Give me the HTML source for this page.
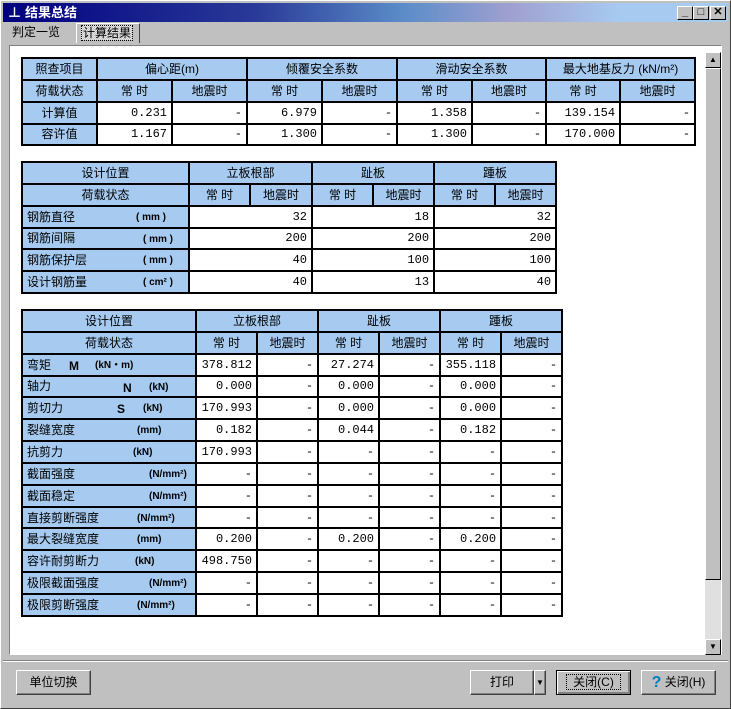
<!DOCTYPE html>
<html><head><meta charset="utf-8">
<style>
*{margin:0;padding:0;box-sizing:border-box}
body{width:731px;height:709px;background:#c0c0c0;font-family:"Liberation Sans","Noto Sans CJK SC","WenQuanYi Zen Hei",sans-serif;font-size:12px;position:relative;overflow:hidden;color:#000}
.win{position:absolute;left:0;top:0;width:731px;height:709px;border:1px solid #fff;border-right-color:#404040;border-bottom-color:#404040}
.title{position:absolute;left:3px;top:3px;width:725px;height:19px;background:linear-gradient(90deg,#000080 0%,#2a3a98 35%,#5a8cc8 55%,#a0a0d0 70%,#a6caf0 85%,#a6caf0 100%);color:#fff;font-weight:bold;font-size:13px;line-height:19px;padding-left:22px}
.tb{position:absolute;top:3px;width:16px;height:14px;background:#c0c0c0;border:1px solid #fff;border-right-color:#000;border-bottom-color:#000;color:#000;font-size:11px;line-height:11px;text-align:center;font-weight:bold}
.tab{position:absolute;top:23px;height:20px;line-height:18px;font-size:12px}
.panel{position:absolute;left:9px;top:45px;width:713px;height:610px;background:#fff;border:1px solid #808080;border-right-color:#fff;border-bottom-color:#fff}
table{position:absolute;border-collapse:collapse;table-layout:fixed}
td{border:2px solid #000;height:21.85px;line-height:18px;padding:0 4px;white-space:nowrap;overflow:hidden}
.h{background:#a6caf0;text-align:center}
.l{background:#a6caf0;text-align:left;position:relative}
.v{background:#fff;text-align:right;font-family:"Liberation Mono","Noto Sans CJK SC",monospace;font-size:12px}
.u{position:absolute;top:2px;font-size:10px;font-weight:bold}
.btn{position:absolute;height:25px;background:#c0c0c0;border:1px solid #fff;border-right-color:#404040;border-bottom-color:#404040;box-shadow:inset -1px -1px #808080;text-align:center;line-height:23px;font-size:12px}
.sb{position:absolute;left:705px;top:52px;width:16px;height:603px;background:#e0e0e0}
.sbb{position:absolute;left:0;width:16px;height:16px;background:#c0c0c0;border:1px solid #fff;border-right-color:#000;border-bottom-color:#000;font-size:8px;line-height:14px;text-align:center}
</style></head><body>
<div class="win"></div>
<div class="title"><span style="position:absolute;left:5px;top:0;font-size:13px">⊥</span>结果总结
<div class="tb" style="left:674px">_</div><div class="tb" style="left:690px">□</div><div class="tb" style="left:707px">✕</div></div>
<div class="tab" style="left:8px;width:62px;padding-left:4px">判定一览</div>
<div class="tab" style="left:76px;width:64px;border:1px solid #fff;border-right-color:#404040;border-bottom:none;padding-left:4px;background:#c0c0c0"><span style="border:1px dotted #000;padding:0 1px;background:repeating-conic-gradient(#c0c0c0 0 25%,#e8e8e8 0 50%) 0 0/2px 2px">计算结果</span></div>
<div class="panel"></div>

<table style="left:21px;top:57px;width:673px">
<colgroup><col style="width:75px"><col style="width:75px"><col style="width:75px"><col style="width:75px"><col style="width:75px"><col style="width:75px"><col style="width:74px"><col style="width:74px"><col style="width:75px"></colgroup>
<tr><td class="h">照查项目</td><td class="h" colspan="2">偏心距(m)</td><td class="h" colspan="2">倾覆安全系数</td><td class="h" colspan="2">滑动安全系数</td><td class="h" colspan="2">最大地基反力 (kN/m²)</td></tr>
<tr><td class="h">荷载状态</td><td class="h">常 时</td><td class="h">地震时</td><td class="h">常 时</td><td class="h">地震时</td><td class="h">常 时</td><td class="h">地震时</td><td class="h">常 时</td><td class="h">地震时</td></tr>
<tr><td class="h">计算值</td><td class="v">0.231</td><td class="v">-</td><td class="v">6.979</td><td class="v">-</td><td class="v">1.358</td><td class="v">-</td><td class="v">139.154</td><td class="v">-</td></tr>
<tr><td class="h">容许值</td><td class="v">1.167</td><td class="v">-</td><td class="v">1.300</td><td class="v">-</td><td class="v">1.300</td><td class="v">-</td><td class="v">170.000</td><td class="v">-</td></tr>
</table>

<table style="left:21px;top:161px;width:534px">
<colgroup><col style="width:167px"><col style="width:61px"><col style="width:62px"><col style="width:61px"><col style="width:61px"><col style="width:61px"><col style="width:61px"></colgroup>
<tr><td class="h">设计位置</td><td class="h" colspan="2">立板根部</td><td class="h" colspan="2">趾板</td><td class="h" colspan="2">踵板</td></tr>
<tr><td class="h">荷载状态</td><td class="h">常 时</td><td class="h">地震时</td><td class="h">常 时</td><td class="h">地震时</td><td class="h">常 时</td><td class="h">地震时</td></tr>
<tr><td class="l">钢筋直径<span class="u" style="left:113px">( mm )</span></td><td class="v" colspan="2">32</td><td class="v" colspan="2">18</td><td class="v" colspan="2">32</td></tr>
<tr><td class="l">钢筋间隔<span class="u" style="left:120px">( mm )</span></td><td class="v" colspan="2">200</td><td class="v" colspan="2">200</td><td class="v" colspan="2">200</td></tr>
<tr><td class="l">钢筋保护层<span class="u" style="left:120px">( mm )</span></td><td class="v" colspan="2">40</td><td class="v" colspan="2">100</td><td class="v" colspan="2">100</td></tr>
<tr><td class="l">设计钢筋量<span class="u" style="left:120px">( cm² )</span></td><td class="v" colspan="2">40</td><td class="v" colspan="2">13</td><td class="v" colspan="2">40</td></tr>
</table>

<table style="left:21px;top:309px;width:540px">
<colgroup><col style="width:174px"><col style="width:61px"><col style="width:61px"><col style="width:61px"><col style="width:61px"><col style="width:61px"><col style="width:61px"></colgroup>
<tr><td class="h">设计位置</td><td class="h" colspan="2">立板根部</td><td class="h" colspan="2">趾板</td><td class="h" colspan="2">踵板</td></tr>
<tr><td class="h">荷载状态</td><td class="h">常 时</td><td class="h">地震时</td><td class="h">常 时</td><td class="h">地震时</td><td class="h">常 时</td><td class="h">地震时</td></tr>
<tr><td class="l">弯矩<span class="u" style="left:46px;font-size:12px">M</span><span class="u" style="left:72px">(kN・m)</span></td><td class="v">378.812</td><td class="v">-</td><td class="v">27.274</td><td class="v">-</td><td class="v">355.118</td><td class="v">-</td></tr>
<tr><td class="l">轴力<span class="u" style="left:100px;font-size:12px">N</span><span class="u" style="left:126px">(kN)</span></td><td class="v">0.000</td><td class="v">-</td><td class="v">0.000</td><td class="v">-</td><td class="v">0.000</td><td class="v">-</td></tr>
<tr><td class="l">剪切力<span class="u" style="left:94px;font-size:12px">S</span><span class="u" style="left:120px">(kN)</span></td><td class="v">170.993</td><td class="v">-</td><td class="v">0.000</td><td class="v">-</td><td class="v">0.000</td><td class="v">-</td></tr>
<tr><td class="l">裂缝宽度<span class="u" style="left:114px">(mm)</span></td><td class="v">0.182</td><td class="v">-</td><td class="v">0.044</td><td class="v">-</td><td class="v">0.182</td><td class="v">-</td></tr>
<tr><td class="l">抗剪力<span class="u" style="left:110px">(kN)</span></td><td class="v">170.993</td><td class="v">-</td><td class="v">-</td><td class="v">-</td><td class="v">-</td><td class="v">-</td></tr>
<tr><td class="l">截面强度<span class="u" style="left:126px">(N/mm²)</span></td><td class="v">-</td><td class="v">-</td><td class="v">-</td><td class="v">-</td><td class="v">-</td><td class="v">-</td></tr>
<tr><td class="l">截面稳定<span class="u" style="left:126px">(N/mm²)</span></td><td class="v">-</td><td class="v">-</td><td class="v">-</td><td class="v">-</td><td class="v">-</td><td class="v">-</td></tr>
<tr><td class="l">直接剪断强度<span class="u" style="left:114px">(N/mm²)</span></td><td class="v">-</td><td class="v">-</td><td class="v">-</td><td class="v">-</td><td class="v">-</td><td class="v">-</td></tr>
<tr><td class="l">最大裂缝宽度<span class="u" style="left:114px">(mm)</span></td><td class="v">0.200</td><td class="v">-</td><td class="v">0.200</td><td class="v">-</td><td class="v">0.200</td><td class="v">-</td></tr>
<tr><td class="l">容许耐剪断力<span class="u" style="left:112px">(kN)</span></td><td class="v">498.750</td><td class="v">-</td><td class="v">-</td><td class="v">-</td><td class="v">-</td><td class="v">-</td></tr>
<tr><td class="l">极限截面强度<span class="u" style="left:126px">(N/mm²)</span></td><td class="v">-</td><td class="v">-</td><td class="v">-</td><td class="v">-</td><td class="v">-</td><td class="v">-</td></tr>
<tr><td class="l">极限剪断强度<span class="u" style="left:114px">(N/mm²)</span></td><td class="v">-</td><td class="v">-</td><td class="v">-</td><td class="v">-</td><td class="v">-</td><td class="v">-</td></tr>
</table>

<div class="sb">
<div class="sbb" style="top:0">▲</div>
<div style="position:absolute;left:0;top:16px;width:16px;height:512px;background:#c0c0c0;border:1px solid #fff;border-right-color:#000;border-bottom-color:#000"></div>
<div class="sbb" style="top:587px">▼</div>
</div>
<div style="position:absolute;left:3px;top:660px;width:725px;height:2px;border-top:1px solid #808080;border-bottom:1px solid #fff"></div>

<div class="btn" style="left:16px;top:670px;width:75px">单位切换</div>
<div class="btn" style="left:470px;top:670px;width:64px">打印</div>
<div class="btn" style="left:534px;top:670px;width:12px;font-size:8px">▼</div>
<div class="btn" style="left:556px;top:670px;width:75px;border:1px solid #000;box-shadow:inset 1px 1px #fff,inset -2px -2px #808080"><span style="border:1px dotted #000;padding:0 6px">关闭(C)</span></div>
<div class="btn" style="left:641px;top:670px;width:75px"><span style="color:#0080c0;font-weight:bold;font-size:16px;vertical-align:-1px">?</span> 关闭(H)</div>
</body></html>
